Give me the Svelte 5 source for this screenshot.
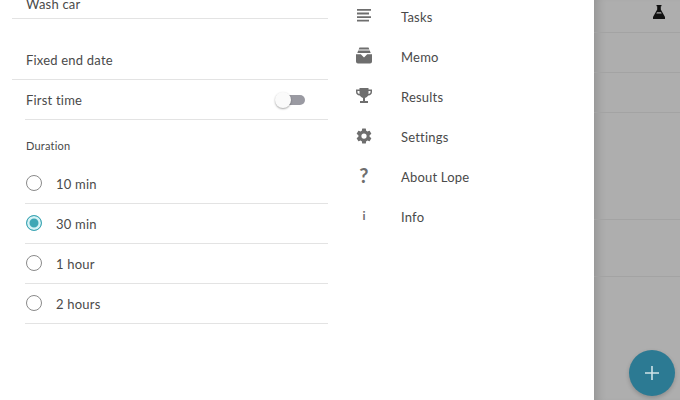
<script lang="ts">
	const durations = ['10 min', '30 min', '1 hour', '2 hours'];
	let selected = $state('30 min');
	const menu = [
		{ label: 'Tasks', icon: 'tasks' },
		{ label: 'Memo', icon: 'memo' },
		{ label: 'Results', icon: 'results' },
		{ label: 'Settings', icon: 'settings' },
		{ label: 'About Lope', icon: 'about' },
		{ label: 'Info', icon: 'info' }
	];
	const rowHeights = [32, 39, 39, 106, 56];
</script>

<div class="screen">
	<section class="form">
		<div class="title-row"><span>Wash car</span></div>
		<div class="row date-row">Fixed end date</div>
		<div class="row inset switch-row">
			<span>First time</span>
			<span class="switch"><span class="track"></span><span class="thumb"></span></span>
		</div>
		<div class="label">Duration</div>
		{#each durations as d (d)}
			<div class="row inset option">
				<span class="radio" class:on={selected === d}></span>
				<span>{d}</span>
			</div>
		{/each}
	</section>

	<nav class="drawer">
		{#each menu as item (item.label)}
			<div class="item">
				<span class="icon">
					{#if item.icon === 'tasks'}
						<svg width="16" height="16" viewBox="0 0 16 16" fill="#6e6e6e"><path d="M1 1h14v1.800H1zM1 4.600h12v1.800H1zM1 8.200h14V10H1zM1 11.800h12v1.800H1z" /></svg>
					{:else if item.icon === 'memo'}
						<svg width="18" height="18" viewBox="0 0 18 18" fill="#6e6e6e"><path d="M4.500.500h9l.9 2H3.600zM3.200 3.500h11.600l.9 2.500H2.300zM1 7.200h4.800L9 10.400l3.200-3.200H17v7.300a2 2 0 0 1-2 2H3a2 2 0 0 1-2-2z" /></svg>
					{:else if item.icon === 'results'}
						<svg width="18" height="18" viewBox="0 0 18 18" fill="#6e6e6e"><path d="M4.500 1h9v1.500H17V5a3.500 3.500 0 0 1-3.800 3.500 4.500 4.500 0 0 1-3.200 2.400V14h3v2H5v-2h3v-3.100a4.500 4.500 0 0 1-3.200-2.400A3.500 3.500 0 0 1 1 5V2.500h3.500zM2.500 4v1c0 1 .8 1.900 2 2V4zM13.500 4v3c1.200-.1 2-1 2-2V4z" /></svg>
					{:else if item.icon === 'settings'}
						<svg width="20" height="20" viewBox="0 0 24 24" fill="#6e6e6e"><path d="M19.430 12.980c.04-.32.07-.64.07-.98s-.03-.66-.07-.98l2.110-1.650a.5.5 0 0 0 .12-.64l-2-3.460a.5.500 0 0 0-.61-.22l-2.490 1a7.300 7.300 0 0 0-1.690-.98l-.38-2.650A.49.49 0 0 0 14 2h-4a.49.49 0 0 0-.49.420l-.38 2.650c-.61.250-1.170.590-1.690.980l-2.490-1a.5.500 0 0 0-.61.220l-2 3.460a.49.49 0 0 0 .12.640l2.110 1.650c-.04.320-.07.650-.07.980s.03.660.07.980l-2.110 1.650a.5.500 0 0 0-.12.640l2 3.460c.12.220.39.300.61.220l2.490-1c.52.400 1.080.730 1.690.980l.38 2.650c.03.240.24.420.49.420h4c.25 0 .46-.18.490-.42l.38-2.650c.61-.25 1.170-.59 1.690-.98l2.490 1c.23.090.49 0 .61-.22l2-3.460a.5.500 0 0 0-.12-.64zM12 15.500a3.500 3.500 0 1 1 0-7 3.500 3.500 0 0 1 0 7z" /></svg>
					{:else if item.icon === 'about'}
						<span class="glyph big">?</span>
					{:else}
						<span class="glyph small">i</span>
					{/if}
				</span>
				<span>{item.label}</span>
			</div>
		{/each}
	</nav>

	<aside class="dimmed">
		{#each rowHeights as h, i (i)}
			<div class="task" style="height: {h}px">
				{#if i === 0}
					<svg class="flask" width="12" height="14" viewBox="0 0 12 14" fill="#111"><path d="M3.500 0h5v1.200H7.800v3.300L12 12v2H0v-2l4.200-7.500V1.200H3.500zM3.300 8.500h5.400L8 7.200H4z" fill-rule="evenodd" /></svg>
				{/if}
			</div>
		{/each}
		<button class="fab" aria-label="Add">
			<svg width="14" height="14" viewBox="0 0 14 14" fill="#cfe3e8"><path d="M6.200 0h1.600v6.200H14v1.600H7.800V14H6.200V7.800H0V6.200h6.200z" /></svg>
		</button>
	</aside>
</div>

<style>
	:global(body) {
		margin: 0;
		background: #fff;
	}
	.screen {
		display: grid;
		grid-template-columns: 340px 254px 86px;
		height: 400px;
		overflow: hidden;
		font-family: Lato, 'Liberation Sans', sans-serif;
		font-size: 13px;
		color: #4a4a4a;
		letter-spacing: 0.2px;
	}
	.form {
		padding-left: 12px;
		padding-right: 12px;
	}
	.title-row {
		height: 18px;
		border-bottom: 1px solid #e3e3e3;
		padding-left: 14px;
		box-sizing: content-box;
		line-height: 8px;
	}
	.row {
		display: flex;
		align-items: center;
		border-bottom: 1px solid #e3e3e3;
		height: 39px;
	}
	.date-row {
		margin-top: 21px;
		padding-left: 14px;
	}
	.inset {
		margin-left: 13px;
		padding-left: 1px;
	}
	.switch-row {
		justify-content: space-between;
		padding-right: 23px;
	}
	.switch {
		position: relative;
		width: 31px;
		height: 16px;
	}
	.track {
		position: absolute;
		left: 3px;
		right: 0;
		top: 3px;
		height: 10px;
		border-radius: 5px;
		background: #9a9aa2;
	}
	.thumb {
		position: absolute;
		left: 1px;
		top: 0;
		width: 16px;
		height: 16px;
		border-radius: 50%;
		background: #fafafa;
		box-shadow: 0 1px 2px rgba(0, 0, 0, 0.35);
	}
	.label {
		font-size: 11px;
		height: 44px;
		padding-left: 14px;
		line-height: 52px;
	}
	.option {
		gap: 14px;
	}
	.radio {
		width: 16px;
		height: 16px;
		box-sizing: border-box;
		border: 1.500px solid #8a8a8a;
		border-radius: 50%;
		margin-top: -2px;
		flex: none;
	}
	.radio.on {
		border-color: #3fa7b5;
		background: #3fa7b5;
		box-shadow: inset 0 0 0 2.500px #d6f3f6;
	}
	.item {
		display: flex;
		align-items: center;
		height: 40px;
		padding-left: 15px;
		position: relative;
		top: -3px;
	}
	.icon {
		width: 18px;
		height: 18px;
		display: flex;
		align-items: center;
		justify-content: center;
		margin-right: 28px;
		margin-top: -2px;
		flex: none;
	}
	.glyph {
		color: #6e6e6e;
		font-weight: 700;
	}
	.glyph.big {
		font-size: 20px;
		margin-top: -2px;
	}
	.glyph.small {
		font-size: 12px;
		margin-top: -2px;
	}
	.dimmed {
		position: relative;
		background: #aeaeae;
		box-shadow: inset 10px 0 8px -6px rgba(0, 0, 0, 0.14);
	}
	.task {
		display: flex;
		align-items: flex-start;
		justify-content: flex-end;
		box-sizing: content-box;
		border-bottom: 1px solid #a3a3a3;
	}
	.flask {
		margin: 5px 15px 0 0;
	}
	.fab {
		position: absolute;
		left: 35px;
		top: 350px;
		width: 46px;
		height: 46px;
		padding: 0;
		border: none;
		border-radius: 50%;
		background: #2c7a93;
		box-shadow: 0 2px 4px rgba(0, 0, 0, 0.2);
		display: flex;
		align-items: center;
		justify-content: center;
	}
</style>
